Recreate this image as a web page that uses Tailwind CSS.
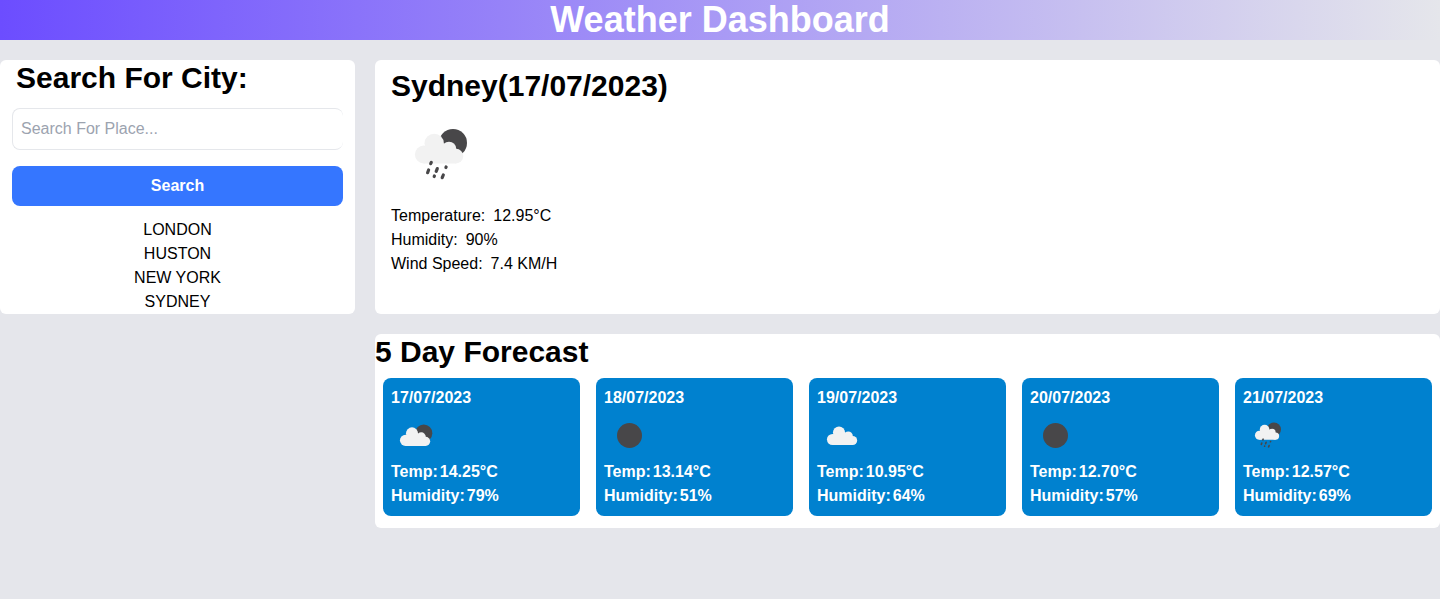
<!DOCTYPE html>
<html lang="en">
<head>
<meta charset="utf-8">
<title>Weather Dashboard</title>
<script src="https://cdn.jsdelivr.net/npm/@tailwindcss/browser@4"></script>
</head>
<body class="min-h-screen bg-[#e5e6eb] font-['Liberation_Sans',Arial,sans-serif] text-base text-black">
<svg class="hidden" aria-hidden="true">
  <defs>
    <g id="cloud-shape">
      <circle cx="32.8" cy="50.5" r="8.9"/><circle cx="43.2" cy="39.4" r="9.7"/><circle cx="58" cy="45" r="7.3"/><circle cx="65" cy="52.1" r="7.3"/>
      <path d="M32.8 59.4V43L43 38L52 39.5L58 41L64 46L68 52L65 59.4Z"/>
    </g>
    <mask id="moon-mask" maskUnits="userSpaceOnUse" x="0" y="0" width="100" height="100">
      <rect width="100" height="100" fill="white"/>
      <use href="#cloud-shape" fill="black" stroke="black" stroke-width="2"/>
    </mask>
    <symbol id="cloud" viewBox="0 0 100 100"><use href="#cloud-shape" fill="#f2f2f2" transform="translate(-10 -4.2) scale(1.25)"/></symbol>
    <symbol id="moon" viewBox="0 0 100 100"><circle cx="51" cy="51" r="25" fill="#484749"/></symbol>
    <symbol id="cloud-moon" viewBox="0 0 100 100">
      <g transform="translate(-12 -2.4) scale(1.25)"><circle cx="62" cy="39" r="13.7" fill="#484749" mask="url(#moon-mask)"/><use href="#cloud-shape" fill="#f2f2f2"/></g>
    </symbol>
    <symbol id="rain" viewBox="0 0 100 100">
      <circle cx="62" cy="38.9" r="14" fill="#484749" mask="url(#moon-mask)"/><use href="#cloud-shape" fill="#f2f2f2"/>
      <path d="M40.3 58.4L39.7 59.7M37.6 66L36.6 68.7M46.3 64.6L45.2 67.3M55.1 63L54.9 63.6M43.4 72L43.2 72.6M52.3 71L51.2 73.7" fill="none" stroke="#484749" stroke-width="3.2" stroke-linecap="round"/>
    </symbol>
  </defs>
</svg>
<h1 class="h-10 bg-linear-to-r/srgb from-[#6c4dff] to-[#e5e6eb] text-center text-4xl font-bold text-white">Weather Dashboard</h1>
<main class="mt-5 grid grid-cols-[355px_1fr] gap-5">
  <section class="h-[254px] rounded-md bg-white px-3">
    <h2 class="pl-1 text-3xl font-bold">Search For City:</h2>
    <input type="text" placeholder="Search For Place..." class="mt-3 block h-[42px] w-full rounded-lg border border-r-0 border-gray-200 px-2 placeholder:text-[#9ca3af]">
    <button class="mt-4 block h-10 w-full rounded-lg bg-[#3576ff] font-bold text-white">Search</button>
    <ul class="mt-3 text-center">
      <li>LONDON</li><li>HUSTON</li><li>NEW YORK</li><li>SYDNEY</li>
    </ul>
  </section>
  <section class="h-[254px] rounded-md bg-white px-4 pt-2">
    <h2 class="text-3xl font-bold">Sydney(17/07/2023)</h2>
    <svg class="block size-[100px]"><use href="#rain"/></svg>
    <p class="flex gap-2"><span>Temperature:</span><span>12.95°C</span></p>
    <p class="flex gap-2"><span>Humidity:</span><span>90%</span></p>
    <p class="flex gap-2"><span>Wind Speed:</span><span>7.4 KM/H</span></p>
  </section>
  <section class="col-start-2 h-[194px] rounded-md bg-white">
    <h2 class="text-3xl font-bold">5 Day Forecast</h2>
    <div class="mt-2 grid grid-cols-5 gap-4 px-2 font-bold text-white">
      <article class="rounded-lg bg-[#0081cf] p-2"><p>17/07/2023</p><svg class="block size-[50px]"><use href="#cloud-moon"/></svg><p class="flex gap-0.5"><span>Temp:</span><span>14.25°C</span></p><p class="flex gap-0.5"><span>Humidity:</span><span>79%</span></p></article>
      <article class="rounded-lg bg-[#0081cf] p-2"><p>18/07/2023</p><svg class="block size-[50px]"><use href="#moon"/></svg><p class="flex gap-0.5"><span>Temp:</span><span>13.14°C</span></p><p class="flex gap-0.5"><span>Humidity:</span><span>51%</span></p></article>
      <article class="rounded-lg bg-[#0081cf] p-2"><p>19/07/2023</p><svg class="block size-[50px]"><use href="#cloud"/></svg><p class="flex gap-0.5"><span>Temp:</span><span>10.95°C</span></p><p class="flex gap-0.5"><span>Humidity:</span><span>64%</span></p></article>
      <article class="rounded-lg bg-[#0081cf] p-2"><p>20/07/2023</p><svg class="block size-[50px]"><use href="#moon"/></svg><p class="flex gap-0.5"><span>Temp:</span><span>12.70°C</span></p><p class="flex gap-0.5"><span>Humidity:</span><span>57%</span></p></article>
      <article class="rounded-lg bg-[#0081cf] p-2"><p>21/07/2023</p><svg class="block size-[50px]"><use href="#rain"/></svg><p class="flex gap-0.5"><span>Temp:</span><span>12.57°C</span></p><p class="flex gap-0.5"><span>Humidity:</span><span>69%</span></p></article>
    </div>
  </section>
</main>
</body>
</html>
